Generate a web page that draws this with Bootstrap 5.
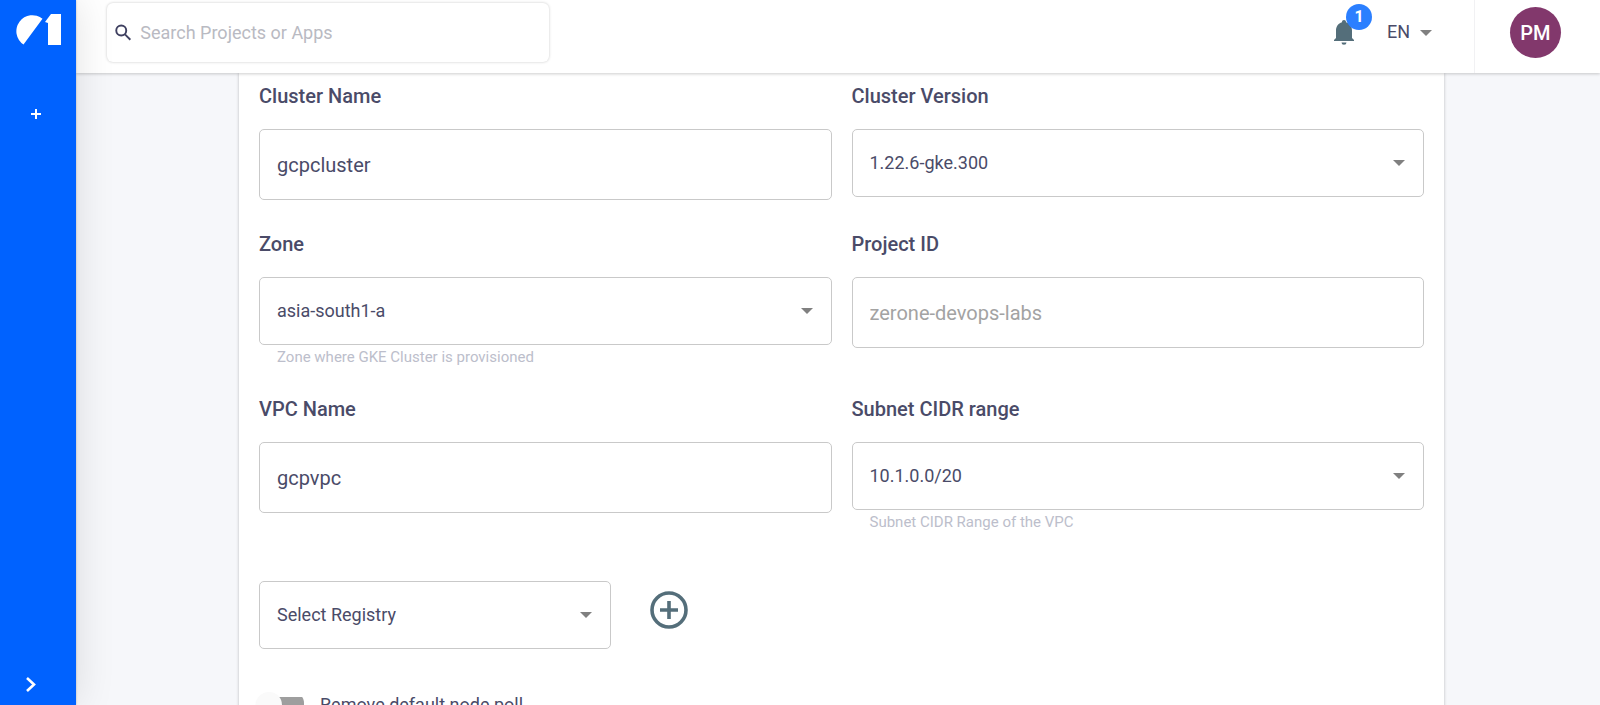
<!DOCTYPE html>
<html lang="en">
<head>
<meta charset="utf-8">
<meta name="viewport" content="width=device-width, initial-scale=1">
<title>Cluster settings</title>
<link href="https://cdn.jsdelivr.net/npm/bootstrap@5.3.0/dist/css/bootstrap.min.css" rel="stylesheet">
<style>
  :root {
    --ink: #4a4b68;
    --arrow: url("data:image/svg+xml,%3Csvg xmlns='http://www.w3.org/2000/svg' viewBox='0 0 12 6'%3E%3Cpath fill='%23808080' d='M0 0h12L6 6z'/%3E%3C/svg%3E");
  }
  body { font-family: Roboto, "Liberation Sans", sans-serif; color: var(--ink); background: #f6f7fa; }

  .side-rail { width: 76px; background: #0062ff; box-shadow: 0 0 40px rgba(0, 0, 0, .12), 0 0 2px rgba(0, 0, 0, .25); z-index: 3; padding: 14px 0 12px; }
  .rail-btn { border: 0; background: none; padding: 0; color: #fff; line-height: 0; }
  .rail-logo { margin-left: 14px; line-height: 0; }
  .rail-add { margin: 64px 0 0 31px; }
  .rail-open { margin-left: 25px; }

  .top-bar { height: 73px; padding-bottom: 8px; z-index: 2; box-shadow: 0 1px 3px rgba(0, 0, 0, .2); }
  .search-box { width: 442px; height: 59px; margin-left: 31px; padding: 0 8px; border-radius: 6px; box-shadow: 0 0 3px rgba(0, 0, 0, .22); }
  .search-box input { font-size: 18px; color: var(--ink); padding: 0 0 0 9px; }
  .search-box input::placeholder { color: #b9bac2; }
  .bell-btn { width: 22px; height: 26px; }
  .bell-count { position: absolute; left: 13px; top: -16px; width: 26px; height: 26px; border-radius: 50%; background: #2b7fff; color: #fff; font-size: 16px; font-weight: 700; line-height: 26px; }
  .lang-select { width: 45px; margin: 0 42px 0 32px; font-size: 18px; line-height: 24px; color: var(--ink); background: var(--arrow) right 0 center / 12px 6px no-repeat; appearance: none; border: 0; padding: 0 0 2px; }
  .account { width: 126px; height: 73px; margin-bottom: -8px; padding: 0 0 8px 35px; border-left: 1px solid #f1f1f3; }
  .avatar { width: 51px; height: 51px; border-radius: 50%; background: #82386c; color: #fff; border: 0; font-size: 20px; font-weight: 500; padding: 0; }

  .page-area { padding: 0 156px 0 163px; }
  .form-sheet { padding: 11px 20px 60px; box-shadow: 0 0 3px rgba(0, 0, 0, .24); }
  .field-grid { --bs-gutter-x: 20px; --bs-gutter-y: 32px; }
  .field-label { display: block; font-size: 20px; line-height: 24px; font-weight: 500; margin-bottom: 21px; }
  .field-box { border: 1px solid #c9c9c9; border-radius: 5px; color: var(--ink); padding: 0 17px; background-color: #fff; }
  input.field-box { height: 71px; font-size: 20px; }
  input.field-box:disabled { background: #fff; color: #a3a3a3; opacity: 1; }
  select.field-box { height: 68px; font-size: 18px; padding-bottom: 2px; background-image: var(--arrow); background-size: 12px 6px; background-position: right 18px center; }
  .field-note { font-size: 15px; line-height: 16px; margin: 4px 0 0 18px; color: #bcbecb; }
  .registry-row { margin-top: 51px; gap: 39px; }
  .registry-select { width: 352px; }
  .round-add { border: 0; background: none; padding: 0; line-height: 0; margin-bottom: 10px; color: #546e7a; }
  .switch-row { margin-top: 43px; gap: 16px; }
  .pill-switch { appearance: none; width: 48px; height: 26px; margin: 0 0 0 -3px; background: linear-gradient(#9e9e9e, #9e9e9e) 8px 5px / 40px 16px no-repeat; border-radius: 0 11px 11px 0; position: relative; }
  .pill-switch::before { content: ""; display: block; width: 26px; height: 26px; border-radius: 50%; background: #fafafa; box-shadow: 0 1px 2px rgba(0, 0, 0, .06); }
  .switch-row label { font-size: 18px; line-height: 26px; }
</style>
</head>
<body>
<div class="d-flex vh-100 overflow-hidden">
  <nav class="side-rail d-flex flex-column align-items-start flex-shrink-0 position-relative" aria-label="Main">
    <a href="#" class="rail-logo" aria-label="Home">
      <svg width="47" height="31" viewBox="0 0 47 31" fill="#fff"><path d="M9.500 30.500A16 16 0 1 1 28.500 4.800Z"/><path d="M37 0h10v31H34V9l-3-1z"/></svg>
    </a>
    <button class="rail-btn rail-add" aria-label="Add project">
      <svg width="10" height="10" viewBox="0 0 10 10" fill="none" stroke="currentColor" stroke-width="2"><path d="M5 0v10M0 5h10"/></svg>
    </button>
    <button class="rail-btn rail-open mt-auto" aria-label="Expand menu">
      <svg width="12" height="17" viewBox="0 0 12 17" fill="none" stroke="currentColor" stroke-width="2.600"><path d="M2 2l7 6.500-7 6.500"/></svg>
    </button>
  </nav>

  <div class="d-flex flex-column flex-grow-1">
    <header class="top-bar bg-white d-flex align-items-center flex-shrink-0 position-relative">
      <form class="search-box bg-white d-flex align-items-center">
        <svg width="17" height="17" viewBox="0 0 17 17" fill="none" stroke="#3f4060" stroke-width="2"><circle cx="6.500" cy="6.500" r="5.200"/><path d="M10.400 10.400L16 16"/></svg>
        <input class="form-control border-0 shadow-none bg-transparent" type="search" placeholder="Search Projects or Apps" aria-label="Search Projects or Apps">
      </form>
      <button class="rail-btn bell-btn position-relative ms-auto" aria-label="Notifications">
        <svg width="22" height="26" viewBox="0 0 22 26" fill="#546e7a"><path d="M11 0a2 2 0 0 1 2 2.200c3.800 1 6 4.200 6 8.300V18l2 2v1H1v-1l2-2v-7.500c0-4.100 2.200-7.300 6-8.300A2 2 0 0 1 11 0zM8.500 22.500h5a2.500 2.200 0 0 1-5 0z"/></svg>
        <span class="bell-count">1</span>
      </button>
      <select class="lang-select" aria-label="Language"><option>EN</option></select>
      <div class="account d-flex align-items-center flex-shrink-0">
        <button class="avatar" aria-label="Account PM">PM</button>
      </div>
    </header>

    <main class="page-area flex-grow-1 overflow-hidden">
      <form class="form-sheet bg-white">
        <div class="row field-grid">
          <div class="col-6">
            <label class="field-label" for="clusterName">Cluster Name</label>
            <input class="form-control field-box" id="clusterName" type="text" value="gcpcluster">
          </div>
          <div class="col-6">
            <label class="field-label" for="clusterVersion">Cluster Version</label>
            <select class="form-select field-box" id="clusterVersion"><option>1.22.6-gke.300</option></select>
          </div>
          <div class="col-6">
            <label class="field-label" for="zone">Zone</label>
            <select class="form-select field-box" id="zone" aria-describedby="zoneNote"><option>asia-south1-a</option></select>
            <p class="field-note" id="zoneNote">Zone where GKE Cluster is provisioned</p>
          </div>
          <div class="col-6">
            <label class="field-label" for="projectId">Project ID</label>
            <input class="form-control field-box" id="projectId" type="text" value="zerone-devops-labs" disabled>
          </div>
          <div class="col-6">
            <label class="field-label" for="vpcName">VPC Name</label>
            <input class="form-control field-box" id="vpcName" type="text" value="gcpvpc">
          </div>
          <div class="col-6">
            <label class="field-label" for="subnet">Subnet CIDR range</label>
            <select class="form-select field-box" id="subnet" aria-describedby="subnetNote"><option>10.1.0.0/20</option></select>
            <p class="field-note" id="subnetNote">Subnet CIDR Range of the VPC</p>
          </div>
        </div>
        <div class="registry-row d-flex align-items-center">
          <select class="form-select field-box registry-select" aria-label="Registry"><option>Select Registry</option></select>
          <button class="round-add" type="button" aria-label="Add registry">
            <svg width="38" height="38" viewBox="0 0 38 38" fill="none" stroke="currentColor" stroke-width="3.600"><circle cx="19" cy="19" r="17"/><path d="M19 10v18M10 19h18"/></svg>
          </button>
        </div>
        <div class="switch-row d-flex align-items-center">
          <input class="pill-switch" id="removePool" type="checkbox" role="switch">
          <label for="removePool">Remove default node poll</label>
        </div>
      </form>
    </main>
  </div>
</div>
<script src="https://cdn.jsdelivr.net/npm/bootstrap@5.3.0/dist/js/bootstrap.bundle.min.js"></script>
</body>
</html>
